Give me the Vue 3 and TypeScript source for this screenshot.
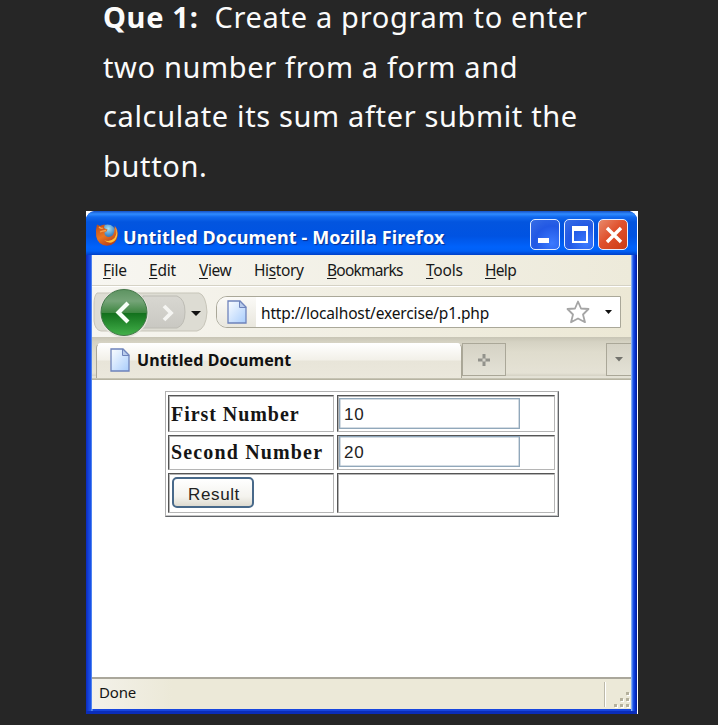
<script setup lang="ts">
import { ref } from 'vue'

const menus = [
  { pre: '', key: 'F', post: 'ile', cls: 'file' },
  { pre: '', key: 'E', post: 'dit', cls: 'edit' },
  { pre: '', key: 'V', post: 'iew', cls: 'view' },
  { pre: 'Hi', key: 's', post: 'tory', cls: 'history' },
  { pre: '', key: 'B', post: 'ookmarks', cls: 'bookmarks' },
  { pre: '', key: 'T', post: 'ools', cls: 'tools' },
  { pre: '', key: 'H', post: 'elp', cls: 'help' },
]
const first = ref('10')
const second = ref('20')
const result = ref('')
function submit() {
  result.value = String(Number(first.value) + Number(second.value))
}
</script>

<template>
  <main class="slide">
    <div class="question">
      <div class="q1"><b>Que 1:</b><span class="q1b">Create a program to enter</span></div>
      <div class="q2">two number from a form and</div>
      <div class="q3">calculate its sum after submit the</div>
      <div class="q4">button.</div>
    </div>
    <div class="shot">
      <section class="window">
        <header class="titlebar">
          <svg class="fox" width="24" height="24" viewBox="0 0 24 24">
            <defs>
              <radialGradient id="globe" cx=".55" cy=".25" r=".8"><stop offset="0" stop-color="#a9e3f5" /><stop offset=".5" stop-color="#3f86c8" /><stop offset="1" stop-color="#1b3f8c" /></radialGradient>
              <linearGradient id="fur" x1="0" y1="0" x2=".6" y2="1"><stop offset="0" stop-color="#b94a1c" /><stop offset=".55" stop-color="#ea7420" /><stop offset="1" stop-color="#b8401c" /></linearGradient>
            </defs>
            <circle cx="12.5" cy="10" r="8.5" fill="url(#globe)" />
            <path d="M2 1.5 L5 3 Q7 1.6 10 1.5 L9 4 Q9 6 12.5 6.4 Q12 8.6 9.4 9.6 Q9.5 14 14 14 Q19.500 13.500 19.500 5.500 Q20 3.500 19.500 2.500 Q23.500 7 22.600 13 Q21 22.500 12 22.700 Q3 22.300 1.200 13.500 Q.2 7 2 1.500Z" fill="url(#fur)" />
            <path d="M20 4 Q23 10 19.500 15 Q15 19.500 9 17 Q16 23 21 16 Q24 10 20 4Z" fill="#ffc13b" />
            <path d="M4 4 Q6 6 8 5 M5 9 Q7 8 11 7.500" stroke="#f7a24c" fill="none" stroke-width="1.300" />
          </svg>
          <h1>Untitled Document - Mozilla Firefox</h1>
          <div class="controls">
            <button class="ctl"><svg width="30" height="30"><rect x="7" y="18" width="11" height="5" fill="#fff" /></svg></button>
            <button class="ctl"><svg width="30" height="30"><path d="M7 6H23V23H7Z M9 11V21H21V11Z" fill="#fff" fill-rule="evenodd" /></svg></button>
            <button class="ctl close"><svg width="30" height="30"><path d="M8 8L22 22M22 8L8 22" stroke="#fff" stroke-width="3.400" /></svg></button>
          </div>
        </header>
        <div class="inner">
          <nav class="menubar">
            <span v-for="m in menus" :key="m.cls" class="menu" :class="m.cls">{{ m.pre }}<u>{{ m.key }}</u>{{ m.post }}</span>
          </nav>
          <div class="toolbar">
            <svg class="history-nav" width="116" height="50" viewBox="0 0 116 50">
              <defs>
                <linearGradient id="green" x1="0" y1="0" x2="0" y2="1"><stop offset="0" stop-color="#5d9361" /><stop offset=".25" stop-color="#75a478" /><stop offset=".5" stop-color="#3f8742" /><stop offset=".52" stop-color="#13711d" /><stop offset="1" stop-color="#43b14a" /></linearGradient>
                <linearGradient id="grey" x1="0" y1="0" x2="0" y2="1"><stop offset="0" stop-color="#d8d7d1" /><stop offset="1" stop-color="#c9c8c2" /></linearGradient>
              </defs>
              <path d="M4 6Q1 9 1 17V34Q2 43 8 44H104Q113 42 114 25Q113 8 106 6Z" fill="#dddcd3" stroke="#c7c5b9" />
              <path d="M50 9H84Q92 12 92 25Q92 38 84 41H44Z" fill="url(#grey)" stroke="#bdbcb4" />
              <circle cx="31" cy="26" r="24.500" fill="#e4e3dc" />
              <circle cx="31" cy="25.500" r="23" fill="url(#green)" stroke="#44784a" />
              <path d="M35 16L25.500 25.500L35 35" fill="none" stroke="#f8fff8" stroke-width="4.200" />
              <path d="M71 19L78 26L71 33" fill="none" stroke="#f5f5f2" stroke-width="3.800" />
              <path d="M98 24H108L103 29Z" fill="#111" />
            </svg>
            <div class="address">
              <div class="identity">
                <svg class="page" width="20" height="24" viewBox="0 0 20 24"><defs><linearGradient id="sheet" x1="0" y1="0" x2="1" y2="1"><stop offset="0" stop-color="#fbfdff" /><stop offset="1" stop-color="#a9cdfc" /></linearGradient></defs><path d="M1 1H13L19 7V23H1Z" fill="url(#sheet)" stroke="#6e83bb" stroke-width="1.300" /><path d="M12.500 1V7.500H19Z" fill="#b9ccec" stroke="#6e83bb" /></svg>
              </div>
              <span class="url">http://localhost/exercise/p1.php</span>
              <svg class="star" width="24" height="24" viewBox="0 0 24 24"><path d="M12 1.500L15 8.500L22.500 9L17 14.500L19 22.200L12 18.500L5 22.200L7 14.500L1.500 9L9 8.500Z" fill="#fff" stroke="#a5a5a5" stroke-width="1.800" stroke-linejoin="round" /></svg>
              <svg class="drop" width="7" height="4"><path d="M0 0H7L3.500 4Z" fill="#111" /></svg>
            </div>
          </div>
          <div class="tabs">
            <div class="tab">
              <svg class="page" width="20" height="24" viewBox="0 0 20 24"><path d="M1 1H13L19 7V23H1Z" fill="url(#sheet)" stroke="#6e83bb" stroke-width="1.300" /><path d="M12.500 1V7.500H19Z" fill="#b9ccec" stroke="#6e83bb" /></svg>
              <b>Untitled Document</b>
            </div>
            <button class="newtab"><svg width="14" height="14"><path d="M5.500 1H8.500V5.500H13V8.500H8.500V13H5.500V8.500H1V5.500H5.500Z" fill="#92928b" /><path d="M5.500 5.500h3v3h-3z" fill="#d5d3c9" /></svg></button>
            <button class="alltabs"><svg width="8" height="5"><path d="M0 0H8L4 4.500Z" fill="#73736d" /></svg></button>
          </div>
          <form class="content" @submit.prevent="submit">
            <div class="grid">
              <div class="cell label l1"><span>First Number</span></div>
              <div class="cell"><input v-model="first" /></div>
              <div class="cell label l2"><span>Second Number</span></div>
              <div class="cell"><input v-model="second" /></div>
              <div class="cell"><button class="result" type="submit"><span>Result</span></button></div>
              <div class="cell">{{ result }}</div>
            </div>
          </form>
          <footer class="status">
            <span>Done</span>
            <div class="grip">
              <svg width="16" height="16"><g fill="#fff"><path d="M13 1h3v3h-3zM7 7h3v3H7zM13 7h3v3h-3zM1 13h3v3H1zM7 13h3v3H7zM13 13h3v3h-3z" /></g><g fill="#b5b19c"><path d="M12 0h3v3h-3zM6 6h3v3H6zM12 6h3v3h-3zM0 12h3v3H0zM6 12h3v3H6zM12 12h3v3h-3z" /></g></svg>
            </div>
          </footer>
        </div>
      </section>
    </div>
  </main>
</template>

<style>
body { background: #262626; overflow: hidden; }
</style>
<style scoped>
* { box-sizing: border-box; }
.slide { width: 718px; height: 725px; background: #262626; overflow: hidden; }
button { padding: 0; margin: 0; }
svg { display: block; flex: none; }
.question { height: 211px; padding-left: 103px; color: #fbfbfb; font: 29px/49.5px "Noto Sans", sans-serif; letter-spacing: .64px; white-space: nowrap; }
.question > div { height: 49.5px; }
.question > .q1 { display: flex; height: 41.5px; line-height: 33.5px; letter-spacing: .68px; }
.q1b { margin-left: 16px; }
.shot { margin-left: 86px; width: 552px; height: 503px; background: linear-gradient(#fff, #fff) 0 0 / 8px 8px no-repeat, linear-gradient(#fff, #fff) 100% 0 / 8px 100% no-repeat; padding-right: 1px; }
.window { height: 503px; padding: 0 6px; border-radius: 9px 9px 0 0; background: linear-gradient(90deg, #0b2bbd, #1746de 3px, #1c55ea 5px, #7fb0f5 6px, #1746de 7px, #1746de 545px, #a9cdf8 545px, #1f57ea 547px, #0733cf 549px, #001b9c 551px); box-shadow: inset 0 -3px #0a2dba; }
.titlebar { height: 44px; margin: 0 -6px; padding: 8px 9px 0 9px; display: flex; align-items: flex-start; border-radius: 9px 9px 0 0; background: linear-gradient(#1550c4 0, #2f8bff 3px, #1169ee 6px, #0355df 11px, #0053e2 25px, #0062fb 36px, #0060f6 40px, #0040c8 44px); }
.fox { margin-top: 4px; }
h1 { margin: 5px 0 0 4px; font: 700 18px/27px "Noto Sans", sans-serif; letter-spacing: .12px; color: #fff; text-shadow: 1px 1px 1px #0a2f94; white-space: nowrap; }
.controls { margin-left: auto; display: flex; gap: 4px; }
.ctl { width: 30px; height: 31px; border: 1.5px solid #e3edff; border-radius: 5px; background: radial-gradient(circle at 75% 80%, #3c7aff, #2258e4 55%, #386ee5); display: grid; place-items: center; overflow: hidden; }
.close { background: linear-gradient(135deg, #e8896c, #e0512d 45%, #cb3c16); }
.inner { height: 454px; background: #eeebdc; display: flex; flex-direction: column; }
.menubar { height: 31px; border-bottom: 1px solid #d5d2c5; background: linear-gradient(90deg, #f7f6f1, #edeada); display: flex; padding-left: 11px; font: 15.5px/30px "Noto Sans", sans-serif; color: #181818; white-space: nowrap; }
.menu { flex: none; letter-spacing: -.75px; }
.menu u { text-underline-offset: 2px; text-decoration-thickness: 1px; }
.file { width: 46px; letter-spacing: -.3px; } .edit { width: 50px; letter-spacing: -.2px; } .view { width: 55px; letter-spacing: -.4px; } .history { width: 73px; letter-spacing: -.4px; } .bookmarks { width: 99px; } .tools { width: 59px; letter-spacing: -.2px; } .help { letter-spacing: -.7px; }
.toolbar { height: 51px; display: flex; align-items: flex-start; border-top: 1px solid #fff; background: linear-gradient(90deg, #f6f5f0, #ece8d5); padding-left: 1px; }
.address { width: 405px; height: 32px; margin: 9px 0 0 7px; border: 1px solid #aaa899; border-radius: 11px 0 0 11px; background: #fff; display: flex; align-items: center; overflow: hidden; }
.identity { width: 39px; height: 30px; background: linear-gradient(#fbfaf7, #e9e7de); padding: 3px 0 0 10px; flex: none; }
.url { margin-left: 5px; width: 305px; padding-top: 2px; font: 15.5px/28px "Noto Sans", sans-serif; letter-spacing: -.15px; color: #111; white-space: nowrap; }
.drop { margin-left: 15px; }
.tabs { height: 43px; background: linear-gradient(#c8c5b5, #d5d2c3 5px, #dfdccd 15px, #e5e2d5 36px, #d4d1c3 39px, #f3f1e7 40px, #b7b4a2 42px, #b7b4a2); display: flex; padding: 6px 0 0 4px; }
.tab { width: 366px; height: 35px; border: 1px solid #a9a696; border-bottom: 0; border-top-color: #fff; border-radius: 5px 5px 0 0; background: linear-gradient(#fff, #f2f0e8 16px, #e8e5d9 17px, #ebe8dc); display: flex; padding: 4px 0 0 13px; }
.tab b { margin-left: 7px; font: 700 16px/24px "Noto Sans", sans-serif; letter-spacing: .1px; color: #111; white-space: nowrap; }
.newtab { width: 44px; height: 33px; border: 1px solid #aaa798; background: linear-gradient(#d5d2c5, #e4e2d6); display: grid; place-items: center; }
.alltabs { width: 25px; height: 33px; margin-left: auto; border: 1px solid #aaa798; border-right: 0; background: linear-gradient(#d5d2c5, #e4e2d6); display: grid; place-items: center; }
.content { height: 297px; background: #fff; padding: 11px 0 0 73px; }
.grid { width: 394px; height: 126px; border: 1px solid; border-color: #b1b1b1 #626569 #626569 #b1b1b1; box-shadow: inset -1px -1px #c6c6c6; padding: 3px 3px 3px 2px; display: grid; grid-template-columns: 166px 218px; grid-template-rows: 37px 35px 40px; column-gap: 3px; row-gap: 3px; }
.cell { border: 1px solid; border-color: #555 #b5b5b5 #b5b5b5 #555; box-shadow: inset 1px 1px #b5b5b5; padding: 2px 1px; }
.label { padding: 5px 2px 0; font: 700 20px/27px "Liberation Serif", serif; letter-spacing: .95px; color: #151515; white-space: nowrap; }
.l2 { padding-top: 3px; letter-spacing: 1.15px; }
input { display: block; width: 181px; height: 31px; border: 1px solid #91a8bb; box-shadow: inset 0 0 0 .5px #a9bac8; padding: 3px 4px 0; outline: 0; background: #fff; font: 17px/24px "Liberation Sans", sans-serif; letter-spacing: .8px; color: #222; }
.cell:nth-child(4) { padding-top: 0; }
.result { margin: 1px 0 0 2px; width: 82px; height: 31px; border: 2px solid #48698a; border-radius: 5px; background: linear-gradient(#fff, #f4f3ee 65%, #dedbd0); font: 17px/27px "Liberation Sans", sans-serif; color: #222; letter-spacing: .6px; display: block; padding: 2px 0 0 2px; }
.status { height: 32px; border-top: 2px solid #aaa79b; background: linear-gradient(90deg, #f3f1e9, #ece9d8 80px); display: flex; padding-left: 7px; font: 15px/27px "Noto Sans", sans-serif; letter-spacing: -.2px; color: #151515; }
.grip { margin: 3px 1px 0 auto; width: 26px; height: 25px; border-left: 1px solid #bcb9a9; box-shadow: inset 1px 0 #fff; padding: 10px 0 0 9px; }
</style>
